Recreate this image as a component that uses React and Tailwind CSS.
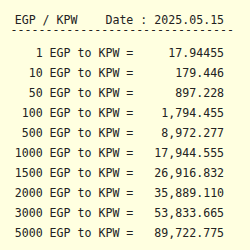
import React from "react";

const rows = [
  ["1", "17.94455"],
  ["10", "179.446"],
  ["50", "897.228"],
  ["100", "1,794.455"],
  ["500", "8,972.277"],
  ["1000", "17,944.555"],
  ["1500", "26,916.832"],
  ["2000", "35,889.110"],
  ["3000", "53,833.665"],
  ["5000", "89,722.775"],
];

export default function App() {
  return (
    <div
      className="w-[250px] h-[250px] bg-[#ffffe0] text-[#222222] text-[11.6px] pt-[10px] overflow-hidden"
      style={{ fontFamily: '"DejaVu Sans Mono", monospace' }}
    >
      <div className="pl-[14.7px] leading-[20px] h-[20px] whitespace-pre">
        {"EGP / KPW    Date : 2025.05.15"}
      </div>
      <div className="pl-[10.5px] leading-[12px] h-[12px] -mt-[6px] whitespace-pre">
        {"--------------------------------"}
      </div>
      <div className="mt-[6.5px] flex flex-col">
        {rows.map(([a, v]) => (
          <div key={a} className="pl-[14.7px] leading-[20px] h-[20px] whitespace-pre">
            {a.padStart(4, " ") + " EGP to KPW =" + v.padStart(13, " ")}
          </div>
        ))}
      </div>
    </div>
  );
}
